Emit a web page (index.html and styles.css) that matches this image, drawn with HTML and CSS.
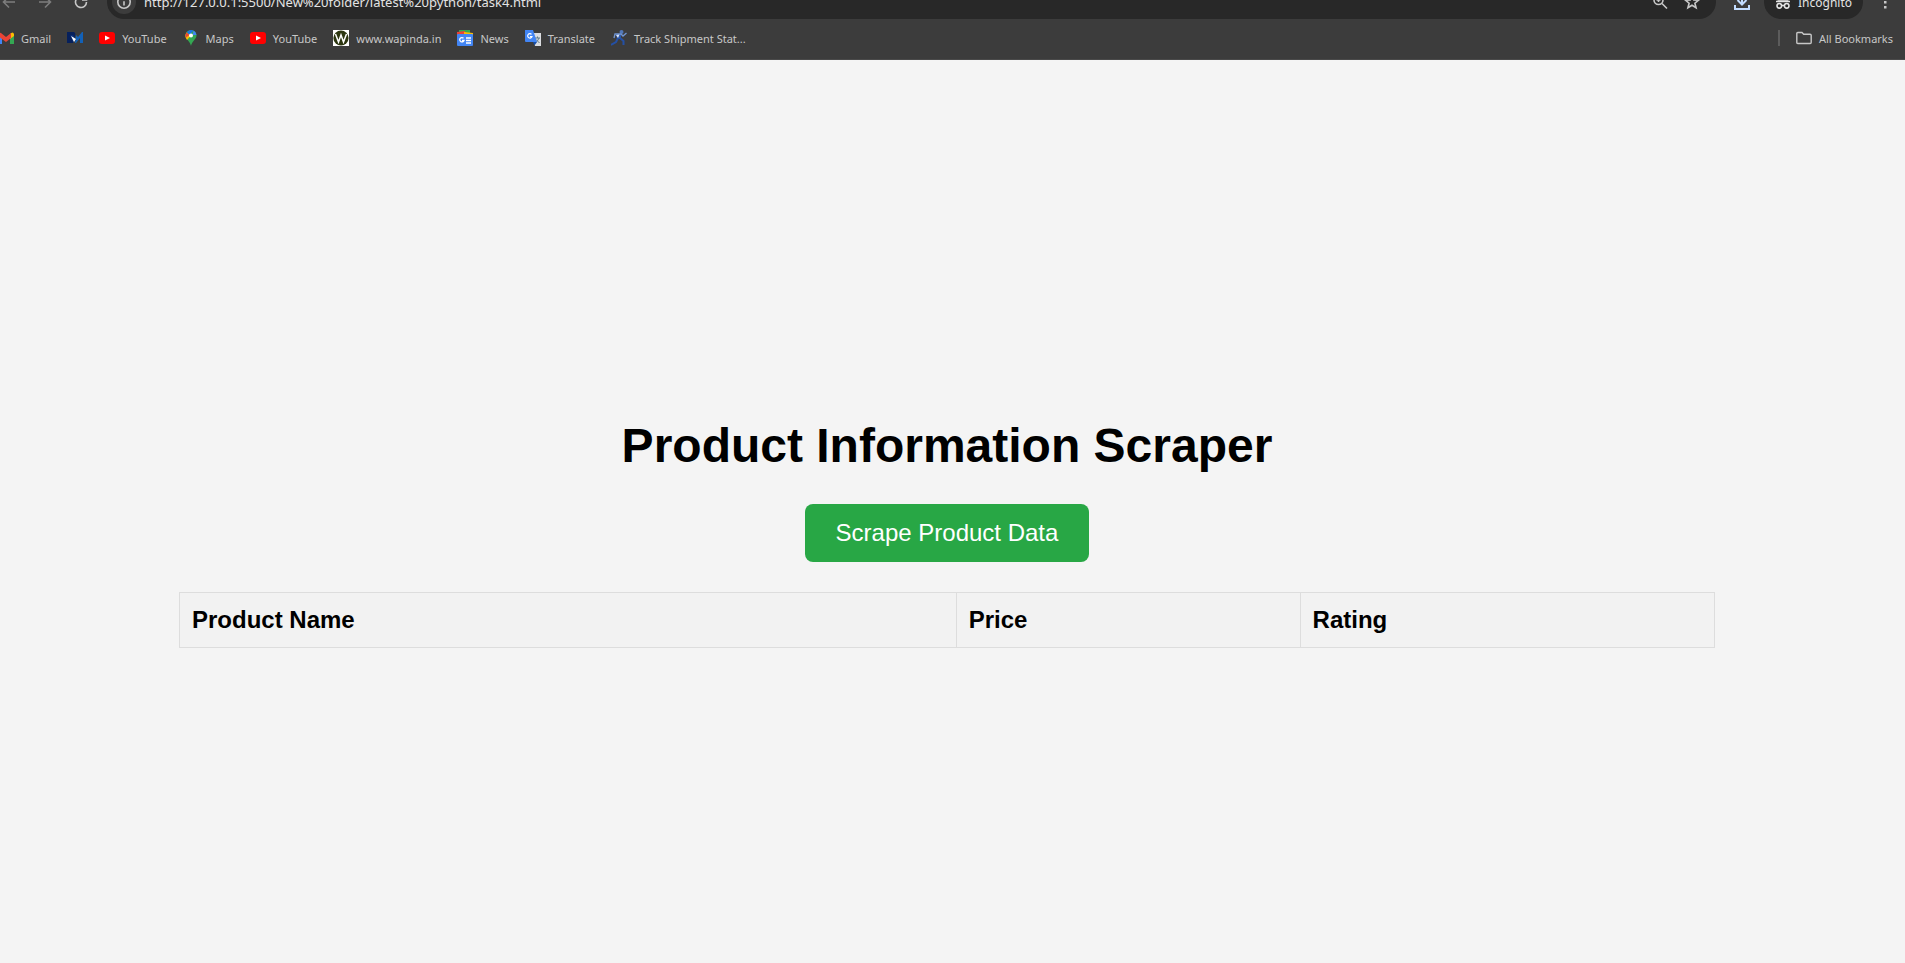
FILE: index.html
```html
<!DOCTYPE html>
<html lang="en">
<head>
<meta charset="utf-8">
<title>Product Information Scraper</title>
<link rel="stylesheet" href="styles.css">
</head>
<body>
<header class="browser">
  <div class="toolbar">
    <div class="nav">
      <button class="icon-btn dim" aria-label="Back"><svg width="16" height="16" viewBox="0 0 16 16"><path d="M14 8H3M8 2.500L2.500 8L8 13.500"/></svg></button>
      <button class="icon-btn dim" aria-label="Forward"><svg width="16" height="16" viewBox="0 0 16 16"><path d="M2 8H13M8 2.500L13.500 8L8 13.500"/></svg></button>
      <button class="icon-btn" aria-label="Reload"><svg width="16" height="16" viewBox="0 0 16 16"><path d="M13.500 8A5.500 5.500 0 1 1 11.500 3.800M13.500 1.500V6H9"/></svg></button>
    </div>
    <div class="omnibox">
      <button class="info" aria-label="Site information"><svg width="16" height="16" viewBox="0 0 16 16"><circle cx="8" cy="8" r="6.200"/><path d="M8 7.300V11.500M8 4.400V6"/></svg></button>
      <input class="url" aria-label="Address" value="http://127.0.0.1:5500/New%20folder/latest%20python/task4.html">
      <button class="icon-btn" aria-label="Zoom"><svg width="16" height="16" viewBox="0 0 16 16"><circle cx="6.500" cy="6" r="4.500"/><path d="M10 9.500L15 14.500M4.500 6H8.500M6.500 4V8"/></svg></button>
      <button class="icon-btn" aria-label="Bookmark this tab"><svg width="16" height="16" viewBox="0 0 16 16"><path d="M8 1.500L9.800 5.900L14.500 6.200L10.900 9.200L12.100 13.800L8 11.300L3.900 13.800L5.100 9.200L1.500 6.200L6.200 5.900Z"/></svg></button>
    </div>
    <button class="icon-btn download" aria-label="Downloads"><svg width="18" height="18" viewBox="0 0 18 18"><path d="M9 0V11M4.500 7L9 11.500L13.500 7M2 12V16H16V12"/></svg></button>
    <button class="incognito"><svg width="16" height="16" viewBox="0 0 16 16"><path d="M3.500 6L5 1.500H11L12.500 6Z" fill="#e3e3e3"/><path d="M1 7.500H15M6.500 11.500H9.500"/><circle cx="4.300" cy="11.800" r="2.300"/><circle cx="11.700" cy="11.800" r="2.300"/></svg>Incognito</button>
    <button class="icon-btn menu" aria-label="Menu"><svg width="16" height="16" viewBox="0 0 16 16"><path d="M7 2h2.500v2.500H7zM7 7h2.500v2.500H7zM7 12h2.500v2.500H7z" fill="#c7c7c7" stroke="none"/></svg></button>
  </div>
  <nav class="bookmarks">
    <a href="#" class="mark"><svg width="16" height="16" viewBox="0 0 16 16"><path d="M0 4V14H4V7.500Z" fill="#4285f4"/><path d="M12 7.500V14H16V4Z" fill="#34a853"/><path d="M12 4V9L16 6V4Q15 1 12 4" fill="#fbbc04"/><path d="M0 4V6L8 12L13 8V3L8 7L3 3Q1 2 0 4" fill="#ea4335"/></svg>Gmail</a>
    <a href="#" class="mark" aria-label="M"><svg width="16" height="16" viewBox="0 0 16 16"><path d="M0 2H7Q9 3 8 6L6 13H0Z" fill="#06205c"/><path d="M8 13L9 5L11 7L15 2H16V13H13V8L9 13Z" fill="#1261b8"/><path d="M3 5H6L9 10L6 12Z" fill="#0b2f76"/><path d="M4 6L9 9L7 12Z" fill="#fff"/></svg></a>
    <a href="#" class="mark"><svg width="16" height="16" viewBox="0 0 16 16"><rect y="2" width="16" height="12" rx="3" fill="#f00"/><path d="M6 5.500V10.500L11 8Z" fill="#fff"/></svg>YouTube</a>
    <a href="#" class="mark"><svg width="16" height="16" viewBox="0 0 16 16"><path d="M8 0A5.500 5.500 0 0 0 2.500 5.500C2.500 9 7 11 8 16C9 11 13.500 9 13.500 5.500A5.500 5.500 0 0 0 8 0" fill="#34a853"/><path d="M3.500 2.500L8 5.500L4 10Q1 6 3.500 2.500" fill="#fbbc04"/><path d="M3.500 2.500L6.500 5L3 7.500Q2 4 3.500 2.500" fill="#ea4335"/><path d="M4 2Q7-1 10.500 .6L6.500 5Z" fill="#1a73e8"/><path d="M10.500 .6Q13 2 13.500 5L9.500 5Z" fill="#4285f4"/><circle cx="8" cy="5.500" r="2" fill="#fff"/></svg>Maps</a>
    <a href="#" class="mark"><svg width="16" height="16" viewBox="0 0 16 16"><rect y="2" width="16" height="12" rx="3" fill="#f00"/><path d="M6 5.500V10.500L11 8Z" fill="#fff"/></svg>YouTube</a>
    <a href="#" class="mark"><svg width="16" height="16" viewBox="0 0 16 16"><path d="M0 0H16V16H0Z" fill="#fff"/><circle cx="8" cy="8" r="7.600" fill="#2c3610"/><path d="M2.500 4L5.500 12L8 5L10.500 12L13.500 4" fill="none" stroke="#fff" stroke-width="1.500"/></svg>www.wapinda.in</a>
    <a href="#" class="mark"><svg width="16" height="16" viewBox="0 0 16 16"><path d="M2 0H13V4H2Z" fill="#34a853"/><path d="M0 2L8 1L9 5H0Z" fill="#ea4335"/><path d="M7 2L16 3V6H7Z" fill="#fbbc04"/><rect y="4" width="16" height="12" rx="1" fill="#4285f4"/><path d="M6.500 8.200A2.200 2.200 0 1 0 7 10.500H5M9 8H14M9 10.500H14M9 13H14" fill="none" stroke="#fff" stroke-width="1.300"/></svg>News</a>
    <a href="#" class="mark"><svg width="16" height="16" viewBox="0 0 16 16"><path d="M7 3H16V16H10Z" fill="#dadce0"/><path d="M10 8H15M12.500 6.500V8M14 8Q13 11 10.500 12.500M11 9.500L14.500 13" fill="none" stroke="#607d8b"/><path d="M0 0H8L12 12H1Q0 12 0 11Z" fill="#4285f4"/><path d="M8 12H12L9.500 15.500Z" fill="#174ea6"/><path d="M6.500 4.300A2.200 2.200 0 1 0 7 6.500H5" fill="none" stroke="#fff" stroke-width="1.200"/></svg>Translate</a>
    <a href="#" class="mark"><svg width="16" height="16" viewBox="0 0 16 16"><circle cx="10.500" cy="2" r="2" fill="#5278ba"/><path d="M5 4L10 4L10 9L6 9Z" fill="#2c57a8"/><path d="M7 8L5 12L0 15M9 8L12.500 11L12.500 15" fill="none" stroke="#2450a5" stroke-width="2"/><path d="M3 8L4 4L10 4L12 6L15.500 3" fill="none" stroke="#6f93cf" stroke-width="1.400"/><path d="M5 5L8.500 4.500L7 8Z" fill="#dbe6fa"/></svg>Track Shipment Stat...</a>
    <a href="#" class="mark all"><svg width="16" height="16" viewBox="0 0 16 16"><path d="M.8 3.500Q.8 2.500 1.800 2.500H6L7.700 4.200H14Q15.200 4.200 15.200 5.300V12.500Q15.200 13.500 14.200 13.500H1.800Q.8 13.500 .8 12.500Z" fill="none" stroke="#c7c7c7" stroke-width="1.400"/></svg>All Bookmarks</a>
  </nav>
</header>
<main class="page">
  <h1 class="title">Product Information Scraper</h1>
  <button class="scrape">Scrape Product Data</button>
  <table class="products">
    <thead>
      <tr><th class="name">Product Name</th><th class="price">Price</th><th class="rating">Rating</th></tr>
    </thead>
  </table>
</main>
</body>
</html>
```
FILE: styles.css
```css
* { box-sizing: border-box; }
body {
  margin: 0;
  min-height: 100vh;
  display: flex;
  flex-direction: column;
  background: #f4f4f4;
  font-family: "Liberation Sans", Arial, sans-serif;
}
button { border: 0; padding: 0; background: none; font: inherit; }

.browser {
  overflow: hidden;
  background: #3c3c3c;
  border-bottom: 1px solid #4a4a4a;
  color: #c7c7c7;
  font-family: "Noto Sans", sans-serif;
  font-size: 12px;
}
.toolbar {
  display: flex;
  align-items: center;
  height: 34px;
  margin-top: -15px;
}
.nav { display: flex; gap: 20px; padding-left: 1px; width: 107px; }
.icon-btn { display: flex; color: #c7c7c7; }
.dim { color: #7d7d7d; }
.toolbar svg { fill: none; stroke: currentColor; stroke-width: 1.6; flex: none; }
.omnibox {
  flex: 1;
  display: flex;
  align-items: center;
  gap: 16px;
  height: 34px;
  padding: 0 16px 0 5px;
  border-radius: 17px;
  background: #282828;
}
.info {
  display: flex;
  align-items: center;
  justify-content: center;
  width: 24px;
  height: 24px;
  border-radius: 12px;
  background: #3c3c3c;
  color: #c7c7c7;
}
.url {
  flex: 1;
  min-width: 0;
  margin-left: -8px;
  padding: 0;
  border: 0;
  background: none;
  color: #e3e3e3;
  font: 13px "Noto Sans", sans-serif;
}
.download { margin: 0 13px 0 17px; color: #c2dcff; }
.toolbar .download svg { stroke-width: 2; }
.incognito {
  display: flex;
  align-items: center;
  gap: 7px;
  height: 34px;
  padding: 0 11px;
  border-radius: 17px;
  background: #282828;
  color: #e3e3e3;
}
.menu { margin: 0 12px 0 14px; }

.bookmarks {
  display: flex;
  align-items: center;
  gap: 16px;
  height: 40px;
  padding: 0 12px 2px 0;
  margin-left: -2px;
  font-size: 11px;
}
.mark {
  display: flex;
  align-items: center;
  gap: 7px;
  color: #c7c7c7;
  text-decoration: none;
  white-space: nowrap;
}
.all {
  margin-left: auto;
  padding-left: 16px;
  border-left: 2px solid #5c5c5c;
}

.page {
  flex: 1;
  display: flex;
  flex-direction: column;
  align-items: center;
  justify-content: center;
  gap: 30px;
  padding: 42px 11px 0 0;
}
.title { margin: 0; font-size: 48px; line-height: 56px; color: #000; }
.scrape {
  padding: 15px 31px;
  border-radius: 8px;
  background: #28a745;
  color: #fff;
  font-size: 24px;
  line-height: 28px;
}
.products {
  width: 81.1%;
  border-collapse: collapse;
  table-layout: fixed;
}
.products th {
  padding: 13px 12px;
  border: 1px solid #ddd;
  background: #f2f2f2;
  font-size: 24px;
  line-height: 28px;
  text-align: left;
}
.name { width: 50.6%; }
.price { width: 22.4%; }
```
